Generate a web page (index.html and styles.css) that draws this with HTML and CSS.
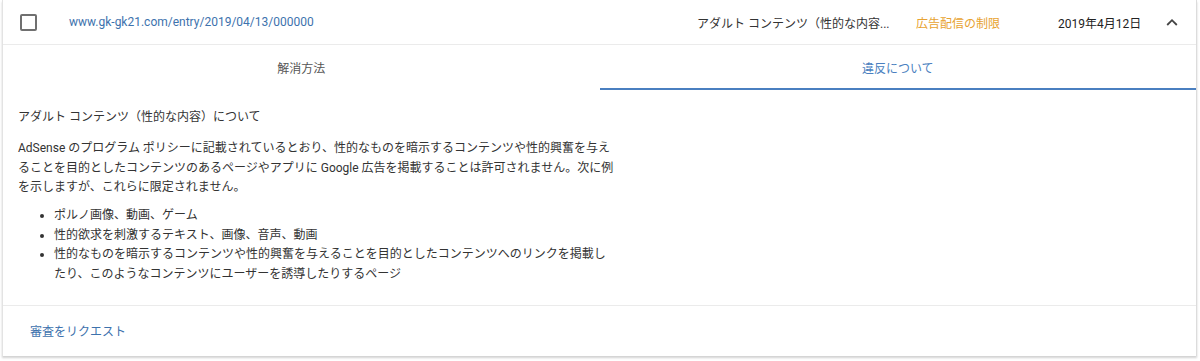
FILE: index.html
```html
<!DOCTYPE html>
<html lang="ja">
<head>
<meta charset="utf-8">
<link rel="stylesheet" href="styles.css">
</head>
<body>
<div class="card">
  <div class="header">
    <span class="checkbox"></span>
    <a class="url">www.gk-gk21.com/entry/2019/04/13/000000</a>
    <span class="spacer"></span>
    <span class="issue">アダルト コンテンツ（性的な内容...</span>
    <span class="status">広告配信の制限</span>
    <span class="date">2019年4月12日</span>
    <svg class="chevron" width="12" height="8" viewBox="0 0 12 8"><path d="M1.2 7 L6 2.2 L10.8 7" fill="none" stroke="#444" stroke-width="1.8"/></svg>
  </div>
  <div class="tabs">
    <div class="tab">解消方法</div>
    <div class="tab active">違反について</div>
  </div>
  <div class="content">
    <p class="title">アダルト コンテンツ（性的な内容）について</p>
    <p class="para">AdSense のプログラム ポリシーに記載されているとおり、性的なものを暗示するコンテンツや性的興奮を与えることを目的としたコンテンツのあるページやアプリに Google 広告を掲載することは許可されません。次に例を示しますが、これらに限定されません。</p>
    <ul class="list">
      <li>ポルノ画像、動画、ゲーム</li>
      <li>性的欲求を刺激するテキスト、画像、音声、動画</li>
      <li>性的なものを暗示するコンテンツや性的興奮を与えることを目的としたコンテンツへのリンクを掲載したり、このようなコンテンツにユーザーを誘導したりするページ</li>
    </ul>
  </div>
  <div class="footer">
    <a class="request">審査をリクエスト</a>
  </div>
</div>
</body>
</html>
```
FILE: styles.css
```css
* { box-sizing: border-box; }
body {
  margin: 0;
  background: #fff;
  font-family: Roboto, "Noto Sans CJK JP", sans-serif;
  font-size: 12px;
  color: #333;
}
.card {
  margin: 0 3px 4px 2px;
  border-left: 1px solid #e3e3e3;
  border-right: 1px solid #dcdcdc;
  box-shadow: 0 2px 2px rgba(0,0,0,0.18);
  background: #fff;
}
.header {
  height: 45px;
  display: flex;
  align-items: center;
  border-bottom: 1px solid #ebebeb;
}
.checkbox {
  width: 17px;
  height: 17px;
  border: 2px solid #707070;
  border-radius: 2px;
  margin-left: 17px;
}
.url {
  margin-left: 32px;
  color: #3d72ad;
}
.spacer { flex: 1; }
.issue {
  width: 219px;
  white-space: nowrap;
  color: #333;
}
.status {
  width: 142px;
  color: #e8a331;
}
.date {
  width: 108px;
  color: #222;
}
.chevron {
  margin-right: 18px;
}
.tabs {
  display: grid;
  grid-template-columns: 1fr 1fr;
  height: 45px;
}
.tab {
  display: flex;
  align-items: center;
  justify-content: center;
  color: #555;
  border-bottom: 2px solid transparent;
  padding-top: 2px;
}
.tab.active {
  color: #4a7fc0;
  border-bottom-color: #4a7fc0;
}
.content {
  padding: 18px 0 21px 15px;
  line-height: 19.5px;
}
.title {
  margin: 0 0 11.5px;
}
.para {
  width: 600px;
  margin: 0 0 8.5px;
}
.list {
  width: 592px;
  margin: 0;
  padding-left: 36px;
}
.footer {
  border-top: 1px solid #ebebeb;
  height: 51px;
  display: flex;
  align-items: center;
  padding-left: 27px;
  padding-bottom: 1px;
}
.request {
  color: #3d72ad;
}
```
